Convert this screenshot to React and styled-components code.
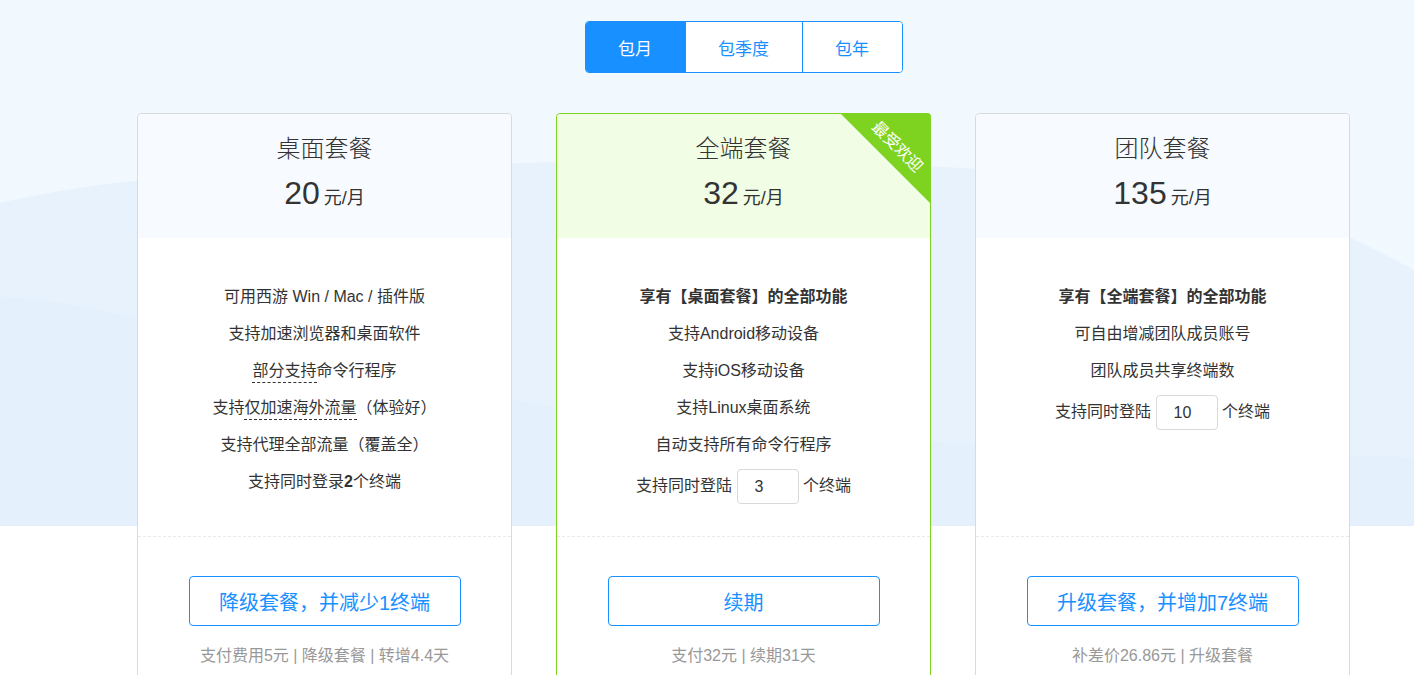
import React from "react";
import styled, { createGlobalStyle } from "styled-components";

const GlobalStyle = createGlobalStyle`
  html, body {
    margin: 0;
    padding: 0;
    background: #fff;
  }
  body {
    font-family: "Liberation Sans", "Noto Sans CJK SC", sans-serif;
    color: #333;
  }
`;

const plans = [
  {
    key: "desktop",
    title: "桌面套餐",
    price: "20",
    features: [
      { text: "可用西游 Win / Mac / 插件版" },
      { text: "支持加速浏览器和桌面软件" },
      { parts: [{ t: "部分支持", dashed: true }, { t: "命令行程序" }] },
      { parts: [{ t: "支持" }, { t: "仅加速海外流量", dashed: true }, { t: "（体验好）" }] },
      { text: "支持代理全部流量（覆盖全）" },
      { parts: [{ t: "支持同时登录" }, { t: "2", bold: true }, { t: "个终端" }] },
    ],
    action: "降级套餐，并减少1终端",
    note: "支付费用5元 | 降级套餐 | 转增4.4天",
  },
  {
    key: "all",
    title: "全端套餐",
    price: "32",
    hot: true,
    features: [
      { text: "享有【桌面套餐】的全部功能", bold: true },
      { text: "支持Android移动设备" },
      { text: "支持iOS移动设备" },
      { text: "支持Linux桌面系统" },
      { text: "自动支持所有命令行程序" },
      { seats: "3" },
    ],
    action: "续期",
    note: "支付32元 | 续期31天",
  },
  {
    key: "team",
    title: "团队套餐",
    price: "135",
    features: [
      { text: "享有【全端套餐】的全部功能", bold: true },
      { text: "可自由增减团队成员账号" },
      { text: "团队成员共享终端数" },
      { seats: "10" },
    ],
    action: "升级套餐，并增加7终端",
    note: "补差价26.86元 | 升级套餐",
  },
];

const Waves = () => (
  <WaveLayer viewBox="0 0 1414 526" preserveAspectRatio="none">
    <rect x="0" y="0" width="1414" height="526" fill="#f1f8fe" />
    <path
      d="M0,203 C60,190 110,181 200,176 C520,158 900,150 1180,188 C1290,204 1350,236 1414,270 L1414,526 L0,526 Z"
      fill="#e7f2fc"
    />
    <path
      d="M0,297 C50,299 100,308 160,325 C320,372 560,420 900,440 C1150,455 1300,452 1414,458 L1414,526 L0,526 Z"
      fill="#e4f0fc"
    />
  </WaveLayer>
);

const App = () => {
  return (
    <Page>
      <GlobalStyle />
      <Waves />
      <Inner>
        <Tabs>
          <Tab active>包月</Tab>
          <Tab>包季度</Tab>
          <Tab>包年</Tab>
        </Tabs>
        <Cards>
          {plans.map((p) => (
            <Card key={p.key} hot={p.hot}>
              {p.hot && (
                <Ribbon>
                  <span>最受欢迎</span>
                </Ribbon>
              )}
              <Head hot={p.hot}>
                <Title>{p.title}</Title>
                <Price>
                  <b>{p.price}</b>
                  <small>元/月</small>
                </Price>
              </Head>
              <Features>
                {p.features.map((f, i) =>
                  f.seats ? (
                    <SeatRow key={i}>
                      支持同时登陆 <SeatInput readOnly value={f.seats} /> 个终端
                    </SeatRow>
                  ) : (
                    <Feature key={i} bold={f.bold}>
                      {f.parts
                        ? f.parts.map((part, j) =>
                            part.dashed ? (
                              <Dashed key={j}>{part.t}</Dashed>
                            ) : part.bold ? (
                              <strong key={j}>{part.t}</strong>
                            ) : (
                              <span key={j}>{part.t}</span>
                            )
                          )
                        : f.text}
                    </Feature>
                  )
                )}
              </Features>
              <Foot>
                <ActionButton>{p.action}</ActionButton>
                <Note>{p.note}</Note>
              </Foot>
            </Card>
          ))}
        </Cards>
      </Inner>
    </Page>
  );
};

const Page = styled.div`
  position: relative;
  min-height: 675px;
  overflow: hidden;
`;

const WaveLayer = styled.svg`
  position: absolute;
  left: 0;
  top: 0;
  width: 100%;
  height: 526px;
  z-index: 0;
`;

const Inner = styled.div`
  position: relative;
  z-index: 1;
  display: flex;
  flex-direction: column;
  align-items: center;
  padding: 21px 0 0 73px;
`;

const Tabs = styled.div`
  display: flex;
  height: 52px;
  border: 1px solid #1890ff;
  border-radius: 4px;
  overflow: hidden;
  background: #fff;
  box-sizing: border-box;
`;

const Tab = styled.div`
  display: flex;
  align-items: center;
  justify-content: center;
  padding: 0 32.5px;
  font-size: 17px;
  color: ${(p) => (p.active ? "#fff" : "#1890ff")};
  background: ${(p) => (p.active ? "#1890ff" : "#fff")};
  & + & {
    border-left: 1px solid #1890ff;
  }
`;

const Cards = styled.div`
  display: grid;
  grid-template-columns: repeat(3, 375px);
  gap: 44px;
  margin-top: 40px;
`;

const Card = styled.div`
  position: relative;
  box-sizing: border-box;
  height: 600px;
  border: 1px solid ${(p) => (p.hot ? "#7ed321" : "#d6dbe1")};
  border-radius: 4px;
  background: #fff;
  display: flex;
  flex-direction: column;
`;

const Ribbon = styled.div`
  position: absolute;
  top: -1px;
  right: -1px;
  width: 91px;
  height: 91px;
  background: #7ed321;
  clip-path: polygon(0 0, 100% 0, 100% 100%);
  border-top-right-radius: 4px;
  span {
    position: absolute;
    left: 57px;
    top: 34px;
    transform: translate(-50%, -50%) rotate(45deg);
    white-space: nowrap;
    color: #fff;
    font-size: 16px;
    line-height: 18px;
  }
`;

const Head = styled.div`
  height: 124px;
  box-sizing: border-box;
  padding-top: 21px;
  text-align: center;
  background: ${(p) => (p.hot ? "#f1fde4" : "#f7fbff")};
  border-radius: 4px 4px 0 0;
`;

const Title = styled.div`
  font-size: 24px;
  line-height: 28px;
  font-weight: 300;
  color: #333;
`;

const Price = styled.div`
  margin-top: 10px;
  line-height: 40px;
  height: 40px;
  color: #333;
  b {
    font-weight: normal;
    font-size: 32px;
  }
  small {
    font-size: 18px;
    margin-left: 4px;
  }
`;

const Features = styled.div`
  height: 299px;
  box-sizing: border-box;
  padding-top: 40px;
  text-align: center;
  border-bottom: 1px dashed #e6e9ed;
`;

const Feature = styled.div`
  font-size: 16px;
  line-height: 37px;
  color: #333;
  font-weight: ${(p) => (p.bold ? "bold" : "normal")};
  strong {
    font-weight: bold;
  }
`;

const Dashed = styled.span`
  padding-bottom: 3px;
  border-bottom: 1px dashed #333;
`;

const SeatRow = styled.div`
  margin-top: 4px;
  font-size: 16px;
  line-height: 37px;
  color: #333;
`;

const SeatInput = styled.input`
  width: 62px;
  height: 35px;
  box-sizing: border-box;
  vertical-align: middle;
  border: 1px solid #d9d9d9;
  border-radius: 4px;
  padding: 0 0 0 17px;
  font-family: "Liberation Sans", "Noto Sans CJK SC", sans-serif;
  font-size: 16px;
  color: #333;
  outline: none;
  background: #fff;
`;

const Foot = styled.div`
  display: flex;
  flex-direction: column;
  align-items: center;
  padding-top: 39px;
`;

const ActionButton = styled.button`
  width: 272px;
  height: 50px;
  border: 1px solid #1890ff;
  border-radius: 4px;
  background: #fff;
  color: #1890ff;
  font-family: "Liberation Sans", "Noto Sans CJK SC", sans-serif;
  font-size: 20px;
  cursor: pointer;
`;

const Note = styled.div`
  margin-top: 19px;
  font-size: 16px;
  line-height: 22px;
  color: #999;
`;

export default App;
